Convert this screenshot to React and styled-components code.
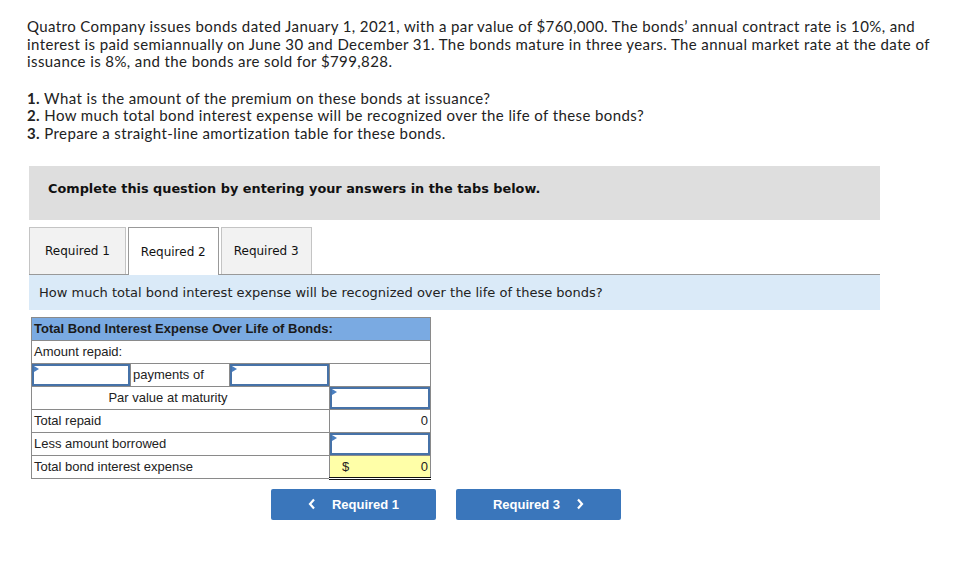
import React from 'react';
import styled, { createGlobalStyle } from 'styled-components';

const GlobalStyle = createGlobalStyle`
  body {
    margin: 0;
    background: #fff;
  }
`;

const Page = styled.div`
  width: 963px;
  padding: 18px 0 0 27px;
  box-sizing: border-box;
`;

const Intro = styled.p`
  margin: 0;
  font-family: Lato, "Open Sans", sans-serif;
  font-size: 15px;
  line-height: 17.6px;
  letter-spacing: 0.4px;
  color: #222;
`;

const Questions = styled.ol`
  list-style: none;
  margin: 19px 0 0;
  padding: 0;
  font-family: Lato, "Open Sans", sans-serif;
  font-size: 15px;
  line-height: 17.6px;
  letter-spacing: 0.4px;
  color: #222;

  b {
    font-weight: 700;
  }
`;

const Notice = styled.div`
  margin: 23px 0 0 2px;
  width: 851px;
  height: 54px;
  background: #dedede;
  display: flex;
  align-items: center;
  padding: 0 0 9px 19px;
  box-sizing: border-box;
  font-family: "DejaVu Sans", Verdana, sans-serif;
  font-size: 12.85px;
  font-weight: bold;
  color: #111;
`;

const TabBar = styled.div`
  margin: 7px 0 0 2px;
  width: 851px;
  display: flex;
  gap: 2px;
  border-bottom: 1px solid #999;
`;

const Tab = styled.div`
  padding: 1px ${(p) => p.$pad}px 0;
  display: flex;
  align-items: center;
  box-sizing: border-box;
  border: 1px solid ${(p) => (p.$active ? '#999' : '#c4c4c4')};
  border-bottom: none;
  background: ${(p) => (p.$active ? '#fff' : '#f2f2f2')};
  margin-bottom: ${(p) => (p.$active ? '-1px' : '0')};
  height: ${(p) => (p.$active ? '48px' : '47px')};
  font-family: "DejaVu Sans", Verdana, sans-serif;
  font-size: 12px;
  color: #111;
`;

const Prompt = styled.div`
  margin-left: 2px;
  width: 851px;
  height: 35px;
  background: #daeaf8;
  display: flex;
  align-items: center;
  padding-left: 10px;
  box-sizing: border-box;
  font-family: "DejaVu Sans", Verdana, sans-serif;
  font-size: 13px;
  color: #222;
`;

const DataTable = styled.table`
  margin: 7px 0 0 4px;
  border-collapse: collapse;
  font-family: "Liberation Sans", Arial, sans-serif;
  font-size: 13px;
  color: #222;

  td {
    border: 1px solid #8a8a8a;
    height: 23px;
    padding: 0 2px;
    box-sizing: border-box;
    white-space: nowrap;
  }
`;

const HeadCell = styled.td`
  && {
    background: #7aaae2;
    font-weight: bold;
    color: #1a1a1a;
  }
`;

const Cell = styled.td`
  && {
    width: ${(p) => p.$w || 'auto'};
    text-align: ${(p) => p.$align || 'left'};
    padding: ${(p) => (p.$input ? '0' : p.$align === 'center' ? '0 25px 0 0' : '0 2px')};
    background: ${(p) => (p.$total ? '#ffffa8' : '#fff')};
    border-bottom: ${(p) => (p.$total ? '3px double #111' : '1px solid #8a8a8a')};
  }
`;

const InputBox = styled.div`
  position: relative;
  height: 22px;
  border: 2px solid #4672a8;
  box-sizing: border-box;
  background: #fff;

  &::before {
    content: '';
    position: absolute;
    left: 0;
    top: 0;
    border-top: 3px solid transparent;
    border-bottom: 3px solid transparent;
    border-left: 5px solid #4a7fc0;
  }
`;

const Money = styled.div`
  display: flex;
  justify-content: space-between;
  padding-left: 10px;
`;

const Buttons = styled.div`
  margin: 9px 0 0 244px;
  display: flex;
  gap: 20px;
`;

const NavButton = styled.button`
  width: 165px;
  height: 31px;
  border: none;
  border-radius: 2px;
  background: #3a76bb;
  color: #fff;
  font-family: "Liberation Sans", Arial, sans-serif;
  font-size: 13px;
  font-weight: bold;
  display: flex;
  align-items: center;
  justify-content: center;
  gap: 16px;
  padding: 0;
`;

const Chevron = ({ dir }) => (
  <svg width="8" height="12" viewBox="0 0 8 12">
    <path
      d={dir === 'left' ? 'M6 1.5 L2 6 L6 10.5' : 'M2 1.5 L6 6 L2 10.5'}
      stroke="#fff"
      strokeWidth="2.2"
      fill="none"
    />
  </svg>
);

const App = () => (
  <>
    <GlobalStyle />
    <Page>
      <Intro>
        Quatro Company issues bonds dated January 1, 2021, with a par value of $760,000. The bonds’ annual contract rate is 10%, and
        <br />
        interest is paid semiannually on June 30 and December 31. The bonds mature in three years. The annual market rate at the date of
        <br />
        issuance is 8%, and the bonds are sold for $799,828.
      </Intro>
      <Questions>
        <li><b>1.</b> What is the amount of the premium on these bonds at issuance?</li>
        <li><b>2.</b> How much total bond interest expense will be recognized over the life of these bonds?</li>
        <li><b>3.</b> Prepare a straight-line amortization table for these bonds.</li>
      </Questions>

      <Notice>Complete this question by entering your answers in the tabs below.</Notice>

      <TabBar>
        <Tab $pad={15}>Required 1</Tab>
        <Tab $pad={12} $active>Required 2</Tab>
        <Tab $pad={12}>Required 3</Tab>
      </TabBar>
      <Prompt>How much total bond interest expense will be recognized over the life of these bonds?</Prompt>

      <DataTable>
        <tbody>
          <tr>
            <HeadCell colSpan={4}>Total Bond Interest Expense Over Life of Bonds:</HeadCell>
          </tr>
          <tr>
            <Cell colSpan={4}>Amount repaid:</Cell>
          </tr>
          <tr>
            <Cell $w="99px" $input><InputBox /></Cell>
            <Cell $w="99px">payments of</Cell>
            <Cell $w="100px" $input><InputBox /></Cell>
            <Cell $w="101px"></Cell>
          </tr>
          <tr>
            <Cell colSpan={3} $align="center">Par value at maturity</Cell>
            <Cell $input><InputBox /></Cell>
          </tr>
          <tr>
            <Cell colSpan={3}>Total repaid</Cell>
            <Cell $align="right">0</Cell>
          </tr>
          <tr>
            <Cell colSpan={3}>Less amount borrowed</Cell>
            <Cell $input><InputBox /></Cell>
          </tr>
          <tr>
            <Cell colSpan={3}>Total bond interest expense</Cell>
            <Cell $total><Money><span>$</span><span>0</span></Money></Cell>
          </tr>
        </tbody>
      </DataTable>

      <Buttons>
        <NavButton><Chevron dir="left" />Required 1</NavButton>
        <NavButton>Required 3<Chevron dir="right" /></NavButton>
      </Buttons>
    </Page>
  </>
);

export default App;
